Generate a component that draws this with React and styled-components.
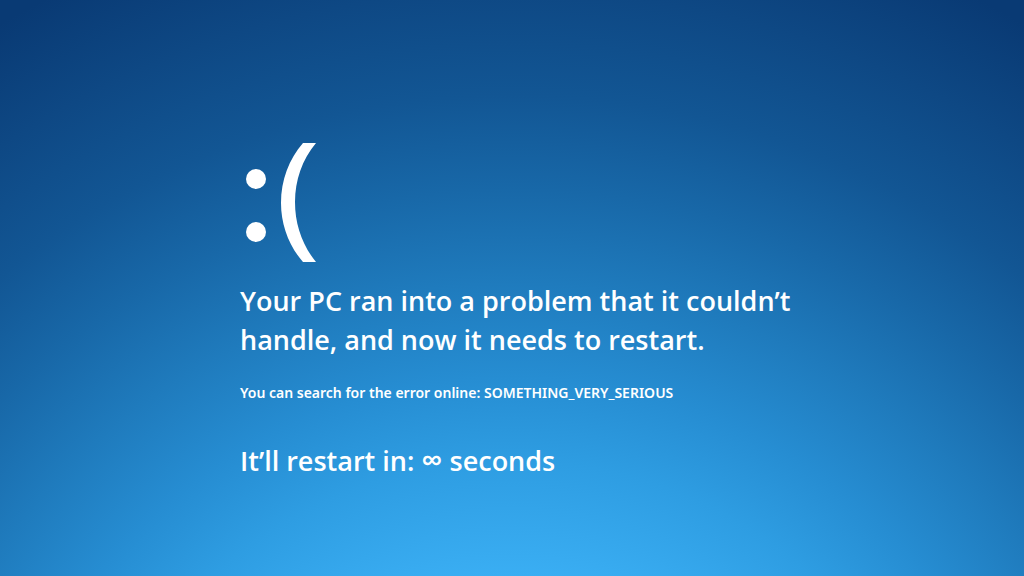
import React from "react";
import styled, { createGlobalStyle } from "styled-components";

const GlobalStyle = createGlobalStyle`
  * { box-sizing: border-box; }
  body {
    margin: 0;
    background: #0a3c78;
    font-family: "Open Sans", "Noto Sans", sans-serif;
  }
`;

const Screen = styled.main`
  display: flex;
  flex-direction: column;
  align-items: flex-start;
  min-height: 100vh;
  padding: 142px 200px 40px 240px;
  color: #fff;
  background: radial-gradient(circle farthest-corner at 50% 158%, #3aaef3 32%, #2e9de2 43%, #268dd2 51%, #1f7bbd 60%, #1868a8 69%, #125694 78%, #0e4884 88%, #093a74 98%);
`;

const Face = styled.svg`
  display: block;
  width: 80px;
  height: 122px;
`;

const Message = styled.p`
  margin: 0;
  font-size: 27px;
  font-weight: 600;
  line-height: 39px;
`;

const Headline = styled(Message).attrs({ as: "h1" })`
  margin-top: 17px;
`;

const Detail = styled.p`
  margin: 24px 0 38px;
  font-family: "Noto Sans", "Open Sans", sans-serif;
  font-size: 14px;
  font-weight: 600;
  line-height: 20px;
`;

const Infinity = styled.span`
  font-size: 30px;
  line-height: 1;
`;

export default function App() {
  return (
    <>
      <GlobalStyle />
      <Screen>
        <Face viewBox="0 0 80 122" role="img" aria-label="Sad face">
          <circle cx="16" cy="37" r="10" fill="#fff" />
          <circle cx="16" cy="90" r="10" fill="#fff" />
          <path d="M63 1H76C62 18 55 38 55 60C55 82 62 103 76 120H63C49 104 41 83 41 61C41 38 49 17 63 1Z" fill="#fff" />
        </Face>
        <Headline>
          Your PC ran into a problem that it couldn’t
          <br />
          handle, and now it needs to restart.
        </Headline>
        <Detail>You can search for the error online: SOMETHING_VERY_SERIOUS</Detail>
        <Message>
          It’ll restart in: <Infinity>∞</Infinity> seconds
        </Message>
      </Screen>
    </>
  );
}
